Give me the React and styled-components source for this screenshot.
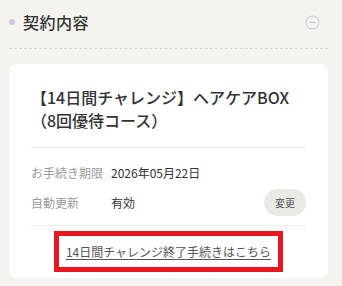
import React from 'react';
import styled, { createGlobalStyle } from 'styled-components';

const Global = createGlobalStyle`
  body {
    margin: 0;
    background: #f5f3f0;
    font-family: "Noto Sans CJK JP", "Noto Sans", sans-serif;
    color: #333;
  }
`;

const Page = styled.div`
  padding: 0 14px 0 9px;
`;

const Header = styled.div`
  height: 44px;
  display: flex;
  align-items: center;
  padding-right: 8px;
`;

const Dot = styled.span`
  width: 6px;
  height: 6px;
  border-radius: 50%;
  background: linear-gradient(135deg, #f7b3d6 0%, #a9d9f2 100%);
  margin-right: 8px;
`;

const Heading = styled.h2`
  margin: 0;
  flex: 1;
  font-size: 16px;
  font-weight: 500;
  color: #333;
  letter-spacing: 0.5px;
`;

const Dashed = styled.div`
  margin-top: 4px;
  border-top: 1px dashed #dcdad6;
`;

const Card = styled.div`
  margin-top: 15px;
  background: #fff;
  border-radius: 8px;
  padding: 22px 22px 6px;
`;

const Title = styled.div`
  font-size: 16px;
  font-weight: 500;
  line-height: 23px;
  color: #333;
  padding-bottom: 15px;
  border-bottom: 1px solid #eeeeec;
`;

const Rows = styled.div`
  padding: 16px 0 9px;
  display: flex;
  flex-direction: column;
  gap: 8px;
  border-bottom: 1px solid #eeeeec;
`;

const Row = styled.div`
  display: flex;
  align-items: center;
  min-height: ${p => (p.$tall ? '27px' : '16px')};
  font-size: 12px;
`;

const Label = styled.span`
  width: 80px;
  color: #9a9a9a;
`;

const Value = styled.span`
  flex: 1;
  color: #333;
`;

const Button = styled.button`
  width: 42px;
  height: 27px;
  border: none;
  border-radius: 14px;
  background: #ebe9e5;
  color: #555;
  font-family: inherit;
  font-size: 10px;
  padding: 0;
`;

const LinkWrap = styled.div`
  display: flex;
  justify-content: center;
  padding-top: 5px;
`;

const LinkBox = styled.div`
  box-sizing: border-box;
  height: 41px;
  border: 5px solid #e8161f;
  padding: 0 7px;
  display: flex;
  align-items: center;
`;

const Link = styled.a`
  font-size: 12px;
  color: #555;
  text-decoration: underline;
  text-underline-offset: 2px;
`;

const MinusIcon = () => (
  <svg width="15" height="15" viewBox="0 0 15 15">
    <circle cx="7.5" cy="7.5" r="6.5" fill="none" stroke="#c8c8c8" strokeWidth="1" />
    <line x1="4.5" y1="7.5" x2="10.5" y2="7.5" stroke="#c8c8c8" strokeWidth="1.2" />
  </svg>
);

export default function App() {
  return (
    <Page>
      <Global />
      <Header>
        <Dot />
        <Heading>契約内容</Heading>
        <MinusIcon />
      </Header>
      <Dashed />
      <Card>
        <Title>
          【14日間チャレンジ】ヘアケアBOX
          <br />
          （8回優待コース）
        </Title>
        <Rows>
          <Row>
            <Label>お手続き期限</Label>
            <Value>2026年05月22日</Value>
          </Row>
          <Row $tall>
            <Label>自動更新</Label>
            <Value>有効</Value>
            <Button>変更</Button>
          </Row>
        </Rows>
        <LinkWrap>
          <LinkBox>
            <Link href="#">14日間チャレンジ終了手続きはこちら</Link>
          </LinkBox>
        </LinkWrap>
      </Card>
    </Page>
  );
}
